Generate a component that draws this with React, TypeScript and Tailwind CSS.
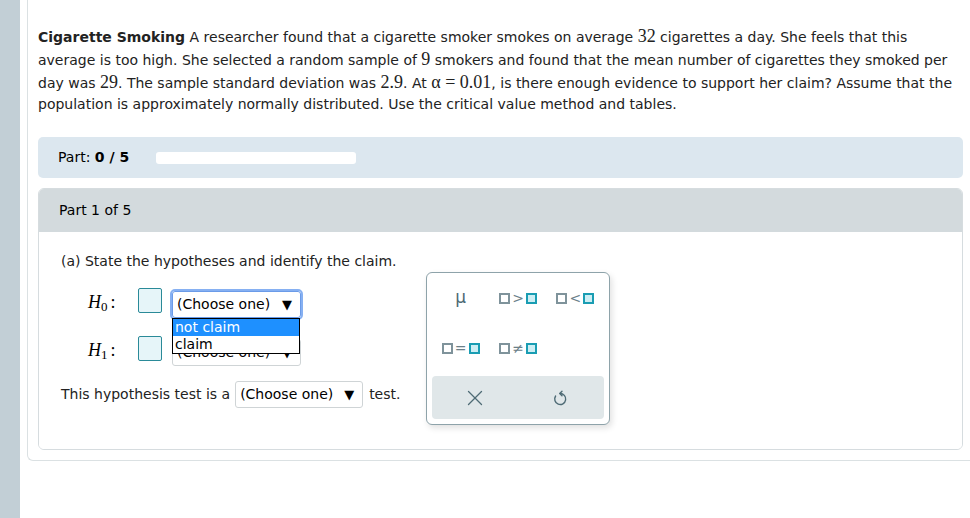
import { X } from 'lucide-react'

const sans = "font-['DejaVu_Sans','Verdana',sans-serif]"
const serif = "font-['Liberation_Serif','Times_New_Roman',serif]"

function M({ children }: { children: React.ReactNode }) {
  return <span className={`${serif} inline-block text-[18px] leading-[23px]`}>{children}</span>
}

function Sq({ filled }: { filled?: boolean }) {
  return (
    <span
      className={
        filled
          ? 'inline-block w-[11px] h-[11px] border-2 border-[#1a9db3] bg-[#cdeef4]'
          : 'inline-block w-[11px] h-[11px] border-2 border-[#7f939b] bg-white'
      }
    />
  )
}

function Rel({ sym }: { sym: string }) {
  return (
    <div className="flex items-center justify-center gap-[1px]">
      <Sq />
      <span className="text-[14px] leading-none text-[#6b8089] font-['DejaVu_Sans',sans-serif] px-[1px]">{sym}</span>
      <Sq filled />
    </div>
  )
}

function Select({ focus, width = 'w-[129px]' }: { focus?: boolean; width?: string }) {
  return (
    <div
      className={`${width} h-[27px] flex items-center justify-between pl-[4px] pr-[8px] rounded-[3px] bg-white text-[14px] text-black ${
        focus ? 'border border-[#6b9be8] outline outline-2 outline-[#86b0f2]' : 'border border-[#cfd4d6]'
      }`}
    >
      <span>(Choose one)</span>
      <span className="text-[13px]">▼</span>
    </div>
  )
}

function H({ n }: { n: string }) {
  return (
    <div className={`w-[50px] mt-[3px] ${serif} text-[18px] leading-[22px] text-black`}>
      <i>H</i>
      <sub className="text-[13px]">{n}</sub>
      <span className="ml-[3px]">:</span>
    </div>
  )
}

function Box() {
  return <div className="w-[24px] h-[25px] rounded-[2px] border border-[#2a8a98] bg-[#e6f5f9]" />
}

export default function App() {
  return (
    <div className={`flex min-h-[518px] bg-white ${sans}`}>
      <div className="w-[20px] shrink-0 bg-[#c2cfd6]" />
      <div className="flex-1 pl-[7px]">
        <div className="border-l border-b border-[#dbe1e3] rounded-bl-[6px] pl-[10px] pr-[7px] pb-[10px]">
          {/* question */}
          <p className="pt-[25px] text-[14px] leading-[20px] text-[#222]">
            <b>Cigarette Smoking</b> A researcher found that a cigarette smoker smokes on average <M>32</M> cigarettes a
            day. She feels that this average is too high. She selected a random sample of <M>9</M> smokers and found
            that the mean number of cigarettes they smoked per day was <M>29</M>. The sample standard deviation was{' '}
            <M>2.9</M>. At <M>α = 0.01</M>, is there enough evidence to support her claim? Assume that the population
            is approximately normally distributed. Use the critical value method and tables.
          </p>

          {/* progress */}
          <div className="mt-[23px] h-[41px] rounded-[5px] bg-[#dce7ef] flex items-center pl-[20px] text-[14px] text-black">
            <span>
              Part: <b>0 / 5</b>
            </span>
            <div className="ml-[27px] w-[200px] h-[12px] rounded-[3px] bg-white" />
          </div>

          {/* part card */}
          <div className="mt-[10px] rounded-[6px] border border-[#d6dcdf] overflow-hidden">
            <div className="h-[43px] bg-[#d3dadd] flex items-center pl-[20px] text-[14px] text-black">Part 1 of 5</div>
            <div className="bg-white pl-[22px] pt-[19px] pb-[24px] text-[14px] text-[#222]">
              <div>(a) State the hypotheses and identify the claim.</div>

              <div className="flex items-start mt-[2px]">
                <div className="w-[365px] pt-[14px]">
                  <div className="flex items-start pl-[27px]">
                    <H n="0" />
                    <Box />
                    <div className="ml-[10px] mt-[3px] relative">
                      <Select focus />
                      <div className="absolute left-0 top-[27px] w-[128px] border border-black bg-white z-10 text-[14px] leading-[17px]">
                        <div className="bg-[#1e90ff] text-white pl-[2px]">not claim</div>
                        <div className="text-black pl-[2px]">claim</div>
                      </div>
                    </div>
                  </div>
                  <div className="flex items-start pl-[27px] mt-[18px]">
                    <H n="1" />
                    <Box />
                    <div className="ml-[10px] mt-[3px]">
                      <Select />
                    </div>
                  </div>
                  <div className="flex items-center mt-[15px]">
                    <span>This hypothesis test is a</span>
                    <div className="ml-[5px]">
                      <Select width="w-[128px]" />
                    </div>
                    <span className="ml-[6px]">test.</span>
                  </div>
                </div>

                {/* palette */}
                <div className="w-[184px] mt-[-2px] rounded-[6px] border border-[#8ea3aa] bg-white p-[5px] shadow-[2px_3px_6px_rgba(0,0,0,0.12)]">
                  <div className="grid grid-cols-3 gap-y-[10px]">
                    <div className="h-[40px] flex items-center justify-center text-[17px] text-[#4e6b75] font-['DejaVu_Sans',sans-serif]">
                      μ
                    </div>
                    <div className="h-[40px] flex items-center justify-center">
                      <Rel sym=">" />
                    </div>
                    <div className="h-[40px] flex items-center justify-center">
                      <Rel sym="<" />
                    </div>
                    <div className="h-[40px] flex items-center justify-center">
                      <Rel sym="=" />
                    </div>
                    <div className="h-[40px] flex items-center justify-center">
                      <Rel sym="≠" />
                    </div>
                  </div>
                  <div className="mt-[8px] h-[43px] rounded-[4px] bg-[#e0e7e9] grid grid-cols-2 items-center">
                    <div className="flex justify-center">
                      <X size={26} strokeWidth={1.2} className="text-[#4e6b75]" />
                    </div>
                    <div className="flex justify-center">
                      <svg width="18" height="18" viewBox="0 0 18 18" fill="none" stroke="#4e6b75" strokeWidth="1.4" strokeLinecap="round" strokeLinejoin="round">
                        <path d="M8 4.5A5.5 5.5 0 1 1 3.6 7" />
                        <path d="M10 2.2 7.8 4.5 10 6.8" />
                      </svg>
                    </div>
                  </div>
                </div>
              </div>
            </div>
          </div>
        </div>
      </div>
    </div>
  )
}
